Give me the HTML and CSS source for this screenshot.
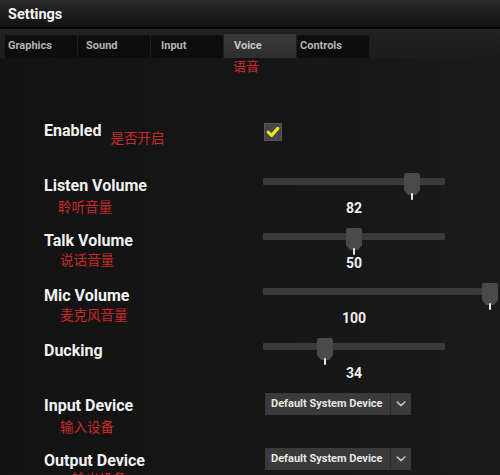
FILE: index.html
```html
<!DOCTYPE html>
<html lang="en">
<head>
<meta charset="utf-8">
<title>Settings</title>
<link rel="stylesheet" href="styles.css">
</head>
<body>
<div class="window">
  <header class="titlebar">Settings</header>
  <nav class="tabs">
    <div class="tab tab--tight">Graphics</div>
    <div class="tab">Sound</div>
    <div class="tab tab--wide">Input</div>
    <div class="tab tab--wide tab--active">Voice</div>
    <div class="tab tab--tight">Controls</div>
  </nav>
  <main class="content">
    <div class="tab-note">语音</div>
    <section class="rows">
      <div class="row">
        <div class="label-cell label-cell--inline">
          <span class="label">Enabled</span>
          <span class="note note--inline">是否开启</span>
        </div>
        <div class="control">
          <span class="checkbox">
            <svg viewBox="0 0 18 18" width="18" height="18"><path d="M4.2 9.2 L7.6 12.4 L13.8 5.4" fill="none" stroke="#e9e81c" stroke-width="3.2" stroke-linecap="round" stroke-linejoin="round"/></svg>
          </span>
        </div>
      </div>

      <div class="row">
        <div class="label-cell">
          <span class="label">Listen Volume</span>
          <span class="note note--low note--left">聆听音量</span>
        </div>
        <div class="control">
          <div class="slider">
            <div class="track"></div>
            <svg class="thumb" style="left:82%" viewBox="0 0 16 28" width="16" height="28"><path d="M2 0 H14 Q16 0 16 2 V17 L12 22 H4 L0 17 V2 Q0 0 2 0Z" fill="#4a4a4a"/><rect x="7" y="20" width="2" height="7" rx="1" fill="#e6e6e6"/></svg>
          </div>
          <div class="value">82</div>
        </div>
      </div>

      <div class="row">
        <div class="label-cell">
          <span class="label">Talk Volume</span>
          <span class="note">说话音量</span>
        </div>
        <div class="control">
          <div class="slider">
            <div class="track"></div>
            <svg class="thumb" style="left:50%" viewBox="0 0 16 28" width="16" height="28"><path d="M2 0 H14 Q16 0 16 2 V17 L12 22 H4 L0 17 V2 Q0 0 2 0Z" fill="#4a4a4a"/><rect x="7" y="20" width="2" height="7" rx="1" fill="#e6e6e6"/></svg>
          </div>
          <div class="value">50</div>
        </div>
      </div>

      <div class="row">
        <div class="label-cell">
          <span class="label">Mic Volume</span>
          <span class="note">麦克风音量</span>
        </div>
        <div class="control">
          <div class="slider slider--wide">
            <div class="track"></div>
            <svg class="thumb" style="left:100%" viewBox="0 0 16 28" width="16" height="28"><path d="M2 0 H14 Q16 0 16 2 V17 L12 22 H4 L0 17 V2 Q0 0 2 0Z" fill="#4a4a4a"/><rect x="7" y="20" width="2" height="7" rx="1" fill="#e6e6e6"/></svg>
          </div>
          <div class="value">100</div>
        </div>
      </div>

      <div class="row">
        <div class="label-cell">
          <span class="label">Ducking</span>
        </div>
        <div class="control">
          <div class="slider">
            <div class="track"></div>
            <svg class="thumb" style="left:34%" viewBox="0 0 16 28" width="16" height="28"><path d="M2 0 H14 Q16 0 16 2 V17 L12 22 H4 L0 17 V2 Q0 0 2 0Z" fill="#4a4a4a"/><rect x="7" y="20" width="2" height="7" rx="1" fill="#e6e6e6"/></svg>
          </div>
          <div class="value">34</div>
        </div>
      </div>

      <div class="row">
        <div class="label-cell">
          <span class="label">Input Device</span>
          <span class="note note--low">输入设备</span>
        </div>
        <div class="control">
          <div class="dropdown">
            <span class="dropdown-text">Default System Device</span>
            <span class="dropdown-arrow"><svg viewBox="0 0 10 6" width="10" height="6"><path d="M1.2 1 L5 4.6 L8.8 1" fill="none" stroke="#c4c4c4" stroke-width="1.6" stroke-linecap="round" stroke-linejoin="round"/></svg></span>
          </div>
        </div>
      </div>

      <div class="row">
        <div class="label-cell">
          <span class="label">Output Device</span>
          <span class="note note--out">输出设备</span>
        </div>
        <div class="control">
          <div class="dropdown">
            <span class="dropdown-text">Default System Device</span>
            <span class="dropdown-arrow"><svg viewBox="0 0 10 6" width="10" height="6"><path d="M1.2 1 L5 4.6 L8.8 1" fill="none" stroke="#c4c4c4" stroke-width="1.6" stroke-linecap="round" stroke-linejoin="round"/></svg></span>
          </div>
        </div>
      </div>
    </section>
  </main>
</div>
</body>
</html>
```

FILE: styles.css
```css
html, body {
  margin: 0;
  padding: 0;
}

body {
  width: 500px;
  height: 475px;
  overflow: hidden;
  background: #141414;
  font-family: Roboto, "Liberation Sans", "Noto Sans CJK SC", sans-serif;
}

.window {
  width: 500px;
  height: 475px;
  overflow: hidden;
  display: flex;
  flex-direction: column;
}

.titlebar {
  height: 27px;
  line-height: 29px;
  padding-left: 8px;
  font-size: 14.5px;
  font-weight: 700;
  color: #f2f2f2;
  background: linear-gradient(#2a2a2a, #1a1a1a 60%, #121212);
  border-bottom: 2px solid #050505;
  flex: none;
}

.tabs {
  height: 29px;
  box-sizing: border-box;
  padding: 6px 0 0 5px;
  display: flex;
  gap: 1px;
  background: linear-gradient(#222222, #1b1b1b);
  flex: none;
}

.tab {
  width: 72px;
  height: 23px;
  box-sizing: border-box;
  padding-left: 8px;
  line-height: 21px;
  font-size: 11px;
  font-weight: 700;
  color: #b4b4b4;
  background: #0d0d0d;
  border-radius: 2px 2px 0 0;
}

.tab--tight {
  padding-left: 3px;
}

.tab--wide {
  padding-left: 10px;
}

.tab--active {
  background: linear-gradient(#3a3a3a, #2e2e2e);
  color: #c4c4c4;
  height: 24px;
  margin-top: -1px;
  line-height: 23px;
}

.content {
  flex: 1;
  background: linear-gradient(90deg, #121212, #161616 60%, #1a1a1a);
}

.tab-note {
  height: 16px;
  line-height: 16px;
  padding-left: 233px;
  font-family: "Noto Sans CJK SC", sans-serif;
  font-size: 13px;
  color: #d12a2a;
}

.rows {
  margin-top: 47px;
  display: flex;
  flex-direction: column;
}

.row {
  height: 55px;
  display: grid;
  grid-template-columns: 263px 1fr;
}

.label-cell {
  padding-left: 44px;
  display: flex;
  flex-direction: column;
  align-items: flex-start;
}

.label-cell--inline {
  flex-direction: row;
}

.label {
  line-height: 20px;
  font-size: 16px;
  font-weight: 700;
  color: #f1f1f1;
  white-space: nowrap;
}

.note {
  line-height: 16px;
  padding-left: 16px;
  font-family: "Noto Sans CJK SC", sans-serif;
  font-size: 13.5px;
  color: #cc2a2a;
  white-space: nowrap;
}

.note--inline {
  padding: 8px 0 0 9px;
}

.note--low {
  margin-top: 2px;
}

.note--left {
  padding-left: 14px;
}

.note--out {
  padding-left: 28px;
  margin-top: -1px;
}

.control {
  padding-top: 2px;
  display: flex;
  flex-direction: column;
  align-items: flex-start;
}

.checkbox {
  width: 18px;
  height: 18px;
  margin-left: 1px;
  box-sizing: border-box;
  background: #464646;
  border: 1px solid #555555;
  display: flex;
  align-items: center;
  justify-content: center;
}

.checkbox svg {
  display: block;
  flex: none;
}

.slider {
  position: relative;
  width: 182px;
  height: 7px;
}

.slider--wide {
  width: 227px;
}

.track {
  height: 7px;
  border-radius: 1px;
  background: #3a3a3a;
}

.thumb {
  position: absolute;
  top: -5px;
  margin-left: -8px;
  display: block;
}

.value {
  width: 182px;
  margin-top: 14px;
  line-height: 18px;
  text-align: center;
  font-size: 14px;
  font-weight: 700;
  color: #efefef;
}

.dropdown {
  margin: -5px 0 0 2px;
  width: 146px;
  height: 22px;
  display: flex;
  background: #3a3a3a;
}

.dropdown-text {
  width: 126px;
  box-sizing: border-box;
  padding-left: 6px;
  line-height: 22px;
  font-size: 11px;
  font-weight: 700;
  color: #e6e6e6;
  white-space: nowrap;
  border-right: 1px solid #2c2c2c;
}

.dropdown-arrow {
  flex: 1;
  display: flex;
  align-items: center;
  justify-content: center;
}

.dropdown-arrow svg {
  display: block;
}
```
